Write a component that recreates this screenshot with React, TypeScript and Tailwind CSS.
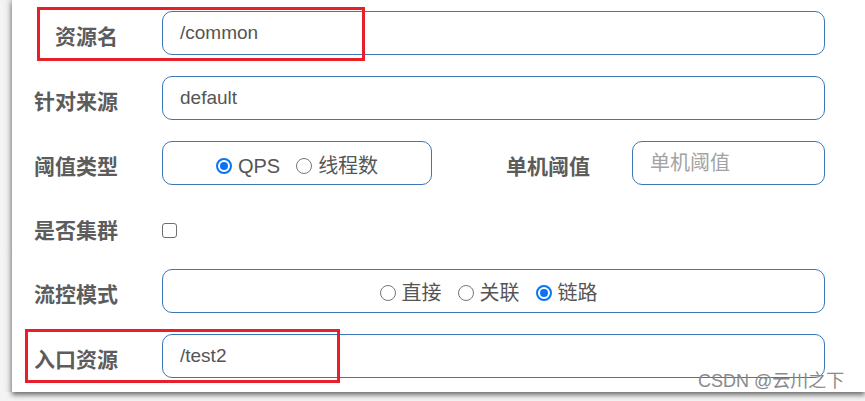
const FONT = { fontFamily: '"Liberation Sans", "Noto Sans CJK SC", sans-serif' }

function Radio({ checked, label }: { checked?: boolean; label: string }) {
  return (
    <span className="flex items-center gap-[6px]">
      {checked ? (
        <span className="flex h-[16px] w-[16px] items-center justify-center rounded-full border-2 border-[#0a74f0] bg-white">
          <span className="h-[8px] w-[8px] rounded-full bg-[#0a74f0]" />
        </span>
      ) : (
        <span className="h-[16px] w-[16px] rounded-full border border-[#767676] bg-white" />
      )}
      <span className="text-[20px] text-[#555]">{label}</span>
    </span>
  )
}

function Label({ children }: { children: string }) {
  return (
    <div className="w-[98px] shrink-0 pt-2 text-right text-[21px] font-bold text-[#5c5c5c]">{children}</div>
  )
}

const BOX = 'h-[44px] rounded-[10px] border border-[#3b77b6] bg-white'

export default function App() {
  return (
    <div className="relative flex h-[401px] w-[865px] overflow-hidden bg-[#f3f3f3]" style={FONT}>
      <div className="h-[392px] w-[12px] shrink-0 bg-gradient-to-r from-[#f5f5f5] via-[#f0f0f0] to-[#d9d9d9]" />
      <div className="flex h-[392px] flex-1 flex-col gap-[21px] bg-white pl-[8px] pr-[40px] pt-[11px] shadow-[0_3px_5px_rgba(0,0,0,0.55)]">
        <div className="flex items-center gap-[44px]">
          <Label>资源名</Label>
          <div className={`${BOX} flex flex-1 items-center pl-[17px] text-[19px] text-[#555]`}>/common</div>
        </div>

        <div className="flex items-center gap-[44px]">
          <Label>针对来源</Label>
          <div className={`${BOX} flex flex-1 items-center pl-[17px] text-[19px] text-[#555]`}>default</div>
        </div>

        <div className="flex items-center gap-[44px]">
          <Label>阈值类型</Label>
          <div className={`${BOX} flex w-[270px] items-center justify-center gap-[16px] pt-[5px]`}>
            <Radio checked label="QPS" />
            <Radio label="线程数" />
          </div>
          <div className="flex flex-1 items-center gap-[42px]">
            <div className="flex-1 pt-2 text-right text-[21px] font-bold text-[#5c5c5c]">单机阈值</div>
            <div className={`${BOX} flex w-[193px] items-center pl-[17px] text-[20px] text-[#a3a3a3]`}>单机阈值</div>
          </div>
        </div>

        <div className="flex h-[42px] items-center gap-[44px]">
          <Label>是否集群</Label>
          <span className="mt-[6px] h-[15px] w-[15px] rounded-[3px] border-[1.5px] border-[#6f6f6f] bg-white" />
        </div>

        <div className="flex items-center gap-[44px]">
          <Label>流控模式</Label>
          <div className={`${BOX} flex flex-1 items-center justify-center gap-[16px] pt-[4px] pr-[10px]`}>
            <Radio label="直接" />
            <Radio label="关联" />
            <Radio checked label="链路" />
          </div>
        </div>

        <div className="flex items-center gap-[44px]">
          <Label>入口资源</Label>
          <div className={`${BOX} flex flex-1 items-center pl-[17px] text-[19px] text-[#555]`}>/test2</div>
        </div>
      </div>

      {/* 标注框 */}
      <div className="absolute left-[37px] top-[7px] h-[54px] w-[328px] border-[3px] border-[#e81f2a]" />
      <div className="absolute left-[25px] top-[329px] h-[54px] w-[315px] border-[3px] border-[#e81f2a]" />

      <div className="absolute left-[698px] top-[369px] text-[18px] leading-[24px] text-[#8a8a8a]">CSDN @云川之下</div>
    </div>
  )
}
